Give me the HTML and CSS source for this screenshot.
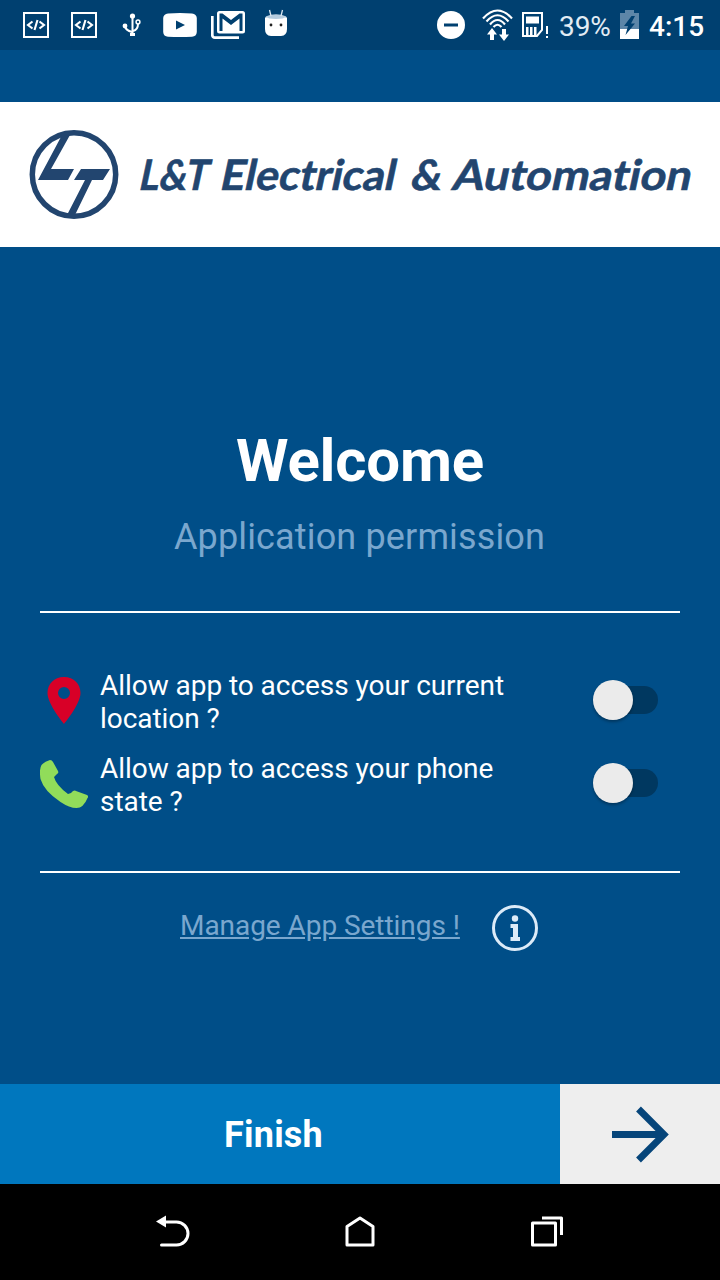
FILE: index.html
```html
<!DOCTYPE html>
<html lang="en">
<head>
  <meta charset="UTF-8">
  <title>Application permission</title>
  <link rel="stylesheet" href="styles.css">
</head>
<body>

  <div class="status-bar">
    <div class="notifications">
      <svg class="icon" viewBox="0 0 32 32">
        <rect x="4" y="4" width="24" height="24" fill="none" stroke="#fff" stroke-width="2"/>
        <path d="M12.500 12.500L8 16l4.500 3.500M19.500 12.500L24 16l-4.500 3.500M17.500 11l-3 10" fill="none" stroke="#fff" stroke-width="2.100"/>
      </svg>
      <svg class="icon" viewBox="0 0 32 32">
        <rect x="4" y="4" width="24" height="24" fill="none" stroke="#fff" stroke-width="2"/>
        <path d="M12.500 12.500L8 16l4.500 3.500M19.500 12.500L24 16l-4.500 3.500M17.500 11l-3 10" fill="none" stroke="#fff" stroke-width="2.100"/>
      </svg>
      <svg class="icon" viewBox="0 0 32 32">
        <path d="M16.500 7v19M16 23c-4-1-6.500-3-7-6M17 22c4-1 5-4 5-7" fill="none" stroke="#fff" stroke-width="2"/>
        <circle cx="16.500" cy="7" r="2.600" fill="#fff"/>
        <circle cx="9" cy="17" r="2.400" fill="#fff"/>
        <circle cx="22" cy="13" r="1.900" fill="none" stroke="#fff" stroke-width="1.500"/>
        <rect x="14" y="24" width="5" height="3" fill="#fff"/>
      </svg>
      <svg class="icon youtube" viewBox="0 0 34 32">
        <path d="M5 4.500Q17 3.500 29 4.500Q33.500 5 33.800 9V23Q33.500 27.500 29 27.700Q17 28.500 5 27.700Q.5 27.500.2 23V9Q.5 5 5 4.500z" fill="#fff"/>
        <path d="M13 11.500v9l9-4.500z" fill="#004070"/>
      </svg>
      <svg class="icon gmail" viewBox="0 0 34 32">
        <path d="M1.300 7v19q0 2.600 2.600 2.600H28" fill="none" stroke="#fff" stroke-width="2.700"/>
        <rect x="6" y="2" width="28" height="22.500" rx="2.500" fill="#fff"/>
        <path d="M8.500 4.500H11.500L20 11L28.500 4.500H31.500V22H28.500V9.500L20 16L11.500 9.500V22H8.500z" fill="#004070"/>
      </svg>
      <svg class="icon" viewBox="0 0 32 32">
        <path d="M5 8.500Q16 5 27 8.500V20q0 6.500-6 7H11q-6-.5-6-7z" fill="#fff"/>
        <path d="M5.500 7.500Q16 3 26.500 7.500Q24 10 16 10T5.500 7.500z" fill="#b5ccdf"/>
        <path d="M11 7L9.500 1M21 7l1.500-6" stroke="#d9e6f0" stroke-width="1.300"/>
        <circle cx="11" cy="16" r="1.400" fill="#222"/>
        <circle cx="21" cy="16" r="1.400" fill="#222"/>
      </svg>
    </div>
    <div class="system">
      <svg width="28" height="32" viewBox="0 0 28 32">
        <circle cx="14" cy="16" r="14" fill="#fff"/>
        <path d="M7 16h14" stroke="#004070" stroke-width="3"/>
      </svg>
      <svg class="wifi" width="32" height="34" viewBox="0 0 32 34">
        <g fill="none" stroke="#fff" stroke-width="2.200">
          <path d="M1 10.500Q15.500-5.500 30 10.500M4.500 13.500Q15.500 1 26.500 13.500M8 16.500Q15.500 7.500 23 16.500M11.500 19Q15.500 14.500 19.500 19"/>
        </g>
        <path d="M10 20l5 6.500h-3v5.500H8v-5.500H5zM22 33l5-6.500h-3v-5.500h-4v5.500h-3z" fill="#fff"/>
      </svg>
      <svg class="sim" width="27" height="32" viewBox="0 0 27 32">
        <path d="M1 4h19v17l-5 6H1z" fill="none" stroke="#fff" stroke-width="2"/>
        <path d="M4 7.500h13v7H4zM4 18h2.500v8H4zM8 18h2.500v8H8zM12 18h2.500v8H12zM24 17h2v8h-2zM24 27h2v2h-2z" fill="#fff"/>
      </svg>
      <span class="percent">39%</span>
      <svg class="battery" width="19" height="32" viewBox="0 0 19 32">
        <path d="M0 4h5V1h9v3h5v16H0z" fill="#5d86a8"/>
        <path d="M0 20h19v10H0z" fill="#fff"/>
        <path d="M11.500 7L4 17h4l-2.500 9L15 14.500h-4L15 7z" fill="#004070"/>
      </svg>
      <span class="clock">4:15</span>
    </div>
  </div>

  <div class="toolbar"></div>

  <div class="brand">
    <svg width="720" height="145" viewBox="0 0 720 145">
      <g fill="#22456f">
        <circle cx="74" cy="72.500" r="41.700" fill="none" stroke="#22456f" stroke-width="5.500"/>
        <path d="M62 33l8 0L51 67h23l-6 11H38z"/>
        <path d="M81 67h29l-7 11H92L75 113h-8l18-35H74z"/>
        <g class="brand-name" transform="translate(0 87.500) skewX(-12)">
          <text x="137.500" textLength="69" lengthAdjust="spacingAndGlyphs">L&amp;T</text>
          <text x="218.500" textLength="175" lengthAdjust="spacingAndGlyphs">Electrical</text>
          <text x="409" textLength="31" lengthAdjust="spacingAndGlyphs">&amp;</text>
          <text x="451" textLength="238.500" lengthAdjust="spacingAndGlyphs">Automation</text>
        </g>
      </g>
    </svg>
  </div>

  <div class="content">
    <h1 class="title">Welcome</h1>
    <div class="subtitle">Application permission</div>

    <div class="permissions">
      <div class="permission">
        <svg width="48" height="48" viewBox="0 0 48 48">
          <path d="M24 0C14 0 7.500 7 7.500 16C7.500 27 24 47 24 47S40.500 27 40.500 16C40.500 7 34 0 24 0zM24 10a6 6 0 1 1 0 12a6 6 0 1 1 0-12z" fill="#d80027" fill-rule="evenodd"/>
        </svg>
        <div class="label">Allow app to access your current location ?</div>
        <div class="switch"><div class="thumb"></div></div>
      </div>
      <div class="permission">
        <svg width="48" height="48" viewBox="0 0 48 48">
          <path d="M10 0Q12 0 13 2l5 9q1 2-1 3l-3 3q2 8 14 17q3 0 5-3q2-1 3 0l11 4q2 1 .500 3q-4 10-11 10q-7 0-16-6Q4 31 .500 19Q-1 9 1.500 5Q4 2 10 0z" fill="#91dc5a"/>
        </svg>
        <div class="label">Allow app to access your phone state ?</div>
        <div class="switch"><div class="thumb"></div></div>
      </div>
    </div>

    <div class="settings">
      <a class="settings-link">Manage App Settings !</a>
      <svg width="46" height="46" viewBox="0 0 46 46">
        <circle cx="23" cy="23" r="21.500" fill="none" stroke="#dcebf8" stroke-width="3"/>
        <circle cx="23" cy="13.500" r="3.200" fill="#dcebf8"/>
        <path d="M18.500 19h7.500V32h2v4h-9.500V32h2.500v-9h-2.500z" fill="#dcebf8"/>
      </svg>
    </div>
  </div>

  <div class="actions">
    <div class="finish">Finish</div>
    <div class="next">
      <svg width="60" height="60" viewBox="0 0 60 60">
        <path d="M2 30.500h52M28.500 5l25.500 25.500-25.500 25.500" fill="none" stroke="#06457a" stroke-width="6.800"/>
      </svg>
    </div>
  </div>

  <div class="nav-bar">
    <svg width="34" height="34" viewBox="0 0 34 34">
      <path d="M8 7h12.500a11.500 11.500 0 0 1 0 23H5.500" fill="none" stroke="#fff" stroke-width="3" stroke-linecap="round"/>
      <path d="M0 6.500L10 .5v12z" fill="#fff"/>
    </svg>
    <svg width="34" height="34" viewBox="0 0 34 34">
      <path d="M4 11.500L17 3l13 8.500V30H4z" fill="none" stroke="#fff" stroke-width="3" stroke-linejoin="round"/>
    </svg>
    <svg width="34" height="34" viewBox="0 0 34 34">
      <path d="M2.500 8h23v22h-23zM12 3h19.500v17" fill="none" stroke="#fff" stroke-width="3" stroke-linejoin="round"/>
    </svg>
  </div>

</body>
</html>
```

FILE: styles.css
```css
body {
  background-color: #004e88;
  font-family: Roboto, sans-serif;
  color: #fff;
  display: flex;
  flex-direction: column;
  height: 1280px;
  margin: 0;
}

svg {
  display: block;
  flex-shrink: 0;
}

.status-bar {
  height: 50px;
  background: #004070;
  display: flex;
  justify-content: space-between;
  align-items: center;
  padding: 0 16px 0 20px;
}

.notifications {
  display: flex;
  gap: 16px;
}

.icon {
  width: 32px;
  height: 32px;
}

.icon.youtube,
.icon.gmail {
  width: 34px;
  margin: 0 -1px;
}

.system {
  display: flex;
  align-items: center;
}

.wifi {
  margin: 0 8px 0 17px;
}

.percent {
  width: 53px;
  margin: 3px 8px 0 10px;
  font-size: 28px;
  letter-spacing: -0.1px;
  color: #e2ecf4;
}

.clock {
  width: 55px;
  margin: 3px 0 0 10px;
  font-size: 28px;
  font-weight: 500;
}

.toolbar {
  height: 52px;
}

.brand {
  height: 145px;
  background: #fff;
}

.brand-name {
  font-family: Lato, sans-serif;
  font-size: 42px;
  font-weight: 700;
  font-variant-ligatures: none;
  stroke: #22456f;
  stroke-width: 0.6px;
}

.content {
  flex: 1;
  padding: 179px 40px 0;
}

.title {
  margin: 0;
  font-size: 60px;
  line-height: 70px;
  letter-spacing: -0.2px;
  text-align: center;
}

.subtitle {
  margin: 20px 1px 0 0;
  font-size: 36px;
  line-height: 42px;
  letter-spacing: 0.15px;
  text-align: center;
  color: #7aa7ce;
}

.permissions {
  margin-top: 53px;
  padding: 54px 0 51px;
  border-top: 2px solid #fff;
  border-bottom: 2px solid #fff;
  display: flex;
  flex-direction: column;
  gap: 13px;
}

.permission {
  display: flex;
  align-items: center;
}

.label {
  width: 440px;
  margin-left: 12px;
  padding: 2px 0;
  font-size: 28px;
  line-height: 33px;
  letter-spacing: -0.05px;
}

.permission svg {
  margin-bottom: 2px;
}

.switch {
  width: 62px;
  height: 28px;
  margin: 0 0 4px 56px;
  border-radius: 14px;
  background: #003860;
}

.thumb {
  width: 40px;
  height: 40px;
  margin: -6px 0 0 -3px;
  border-radius: 50%;
  background: #ebebeb;
  box-shadow: 0 2px 3px rgba(0,0,0,0.3);
}

.settings {
  display: flex;
  gap: 32px;
  padding: 32px 0 0 140px;
}

.settings-link {
  margin-top: 4px;
  font-size: 28px;
  line-height: 33px;
  letter-spacing: -0.05px;
  color: #7aa7ce;
  text-decoration: underline;
}

.actions {
  height: 100px;
  display: flex;
}

.finish {
  flex: 1;
  padding-right: 13px;
  background: #0077be;
  font-size: 36px;
  font-weight: bold;
  line-height: 103px;
  letter-spacing: 0.2px;
  text-align: center;
}

.next {
  width: 160px;
  background: #eee;
  display: flex;
  justify-content: center;
  align-items: center;
}

.nav-bar {
  height: 96px;
  background: #000;
  display: flex;
  justify-content: space-between;
  align-items: center;
  padding: 0 156px;
}
```
